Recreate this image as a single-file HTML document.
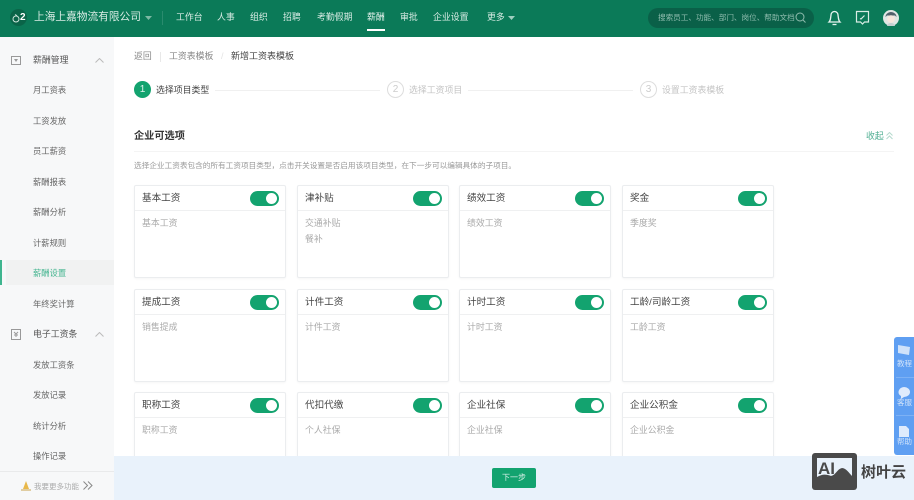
<!DOCTYPE html>
<html lang="zh"><head><meta charset="utf-8"><style>
html,body{margin:0;padding:0}
body{width:914px;height:500px;position:relative;overflow:hidden;background:#fff;font-family:"Liberation Sans","Noto Sans CJK SC",sans-serif;color:#333}
.a{position:absolute;white-space:nowrap;line-height:1}
#top{position:absolute;left:0;top:0;width:914px;height:37px;background:#0b7a58}
.n{position:absolute;top:12px;font-size:8.9px;line-height:11px;color:#d9ece5;white-space:nowrap}
#side{position:absolute;left:0;top:37px;width:114px;height:463px;background:#f7f8f9}
.m{position:absolute;left:33px;font-size:8.300px;line-height:11px;color:#666;white-space:nowrap}
.g{position:absolute;left:33px;font-size:8.900px;line-height:11px;color:#555;white-space:nowrap}
.c{position:absolute;box-sizing:border-box;width:152px;height:93px;background:#fff;border:1px solid #ebedef;border-radius:2px;box-shadow:0 1px 2px rgba(0,0,0,.04)}
.c b{position:absolute;left:7px;top:6px;font-weight:400;font-size:9.600px;line-height:13px;color:#444;white-space:nowrap}
.c hr{position:absolute;left:0;right:0;top:24px;margin:0;border:0;border-top:1px solid #eff0f1}
.c i{position:absolute;right:6px;top:5px;width:29px;height:15px;border-radius:8px;background:#13a36f}
.c i:after{content:"";position:absolute;right:2px;top:2px;width:11px;height:11px;border-radius:50%;background:#fff}
.c p{position:absolute;left:7px;margin:0;font-size:8.900px;line-height:11px;color:#aaa;white-space:nowrap}
.st{position:absolute;top:81px;width:17px;height:17px;box-sizing:border-box;border-radius:50%;border:1px solid #ddd;color:#ccc;font-size:10px;line-height:15px;text-align:center}
.ln{position:absolute;top:90px;height:1px;background:#f0f0f0}
</style></head><body>
<div id="top">
<svg style="position:absolute;left:10px;top:9px" width="18" height="18" viewBox="0 0 18 18"><circle cx="8.500" cy="8.500" r="8.500" fill="#0a6448"/><circle cx="6" cy="10" r="3" fill="none" stroke="#cfe5dc" stroke-width="1"/><path d="M5 5.500l2 1.200" stroke="#cfe5dc"/></svg>
<span class="a" style="left:20px;top:13px;font-size:10px;font-weight:700;color:#fff">2</span>
<span class="a" style="left:34px;top:12px;font-size:10.700px;color:#d9ece5">上海上嘉物流有限公司</span>
<svg style="position:absolute;left:145px;top:16px" width="7" height="4"><path d="M0 0h7L3.500 4z" fill="#7db9a4"/></svg>
<div style="position:absolute;left:162px;top:11px;width:1px;height:14px;background:#2a8b6e"></div>
<span class="n" style="left:176px">工作台</span><span class="n" style="left:217px">人事</span><span class="n" style="left:250px">组织</span><span class="n" style="left:283px">招聘</span><span class="n" style="left:317px">考勤假期</span><span class="n" style="left:367px;color:#e8f4ef">薪酬</span><span class="n" style="left:400px">审批</span><span class="n" style="left:433px">企业设置</span><span class="n" style="left:487px">更多</span>
<svg style="position:absolute;left:508px;top:16px" width="7" height="4"><path d="M0 0h7L3.500 4z" fill="#9fcfbf"/></svg>
<div style="position:absolute;left:367px;top:29px;width:18px;height:2px;background:#fff"></div>
<div style="position:absolute;left:648px;top:8px;width:166px;height:20px;border-radius:10px;background:#0a6048"></div>
<span class="a" style="left:658px;top:14px;font-size:7.600px;color:#8fbcae">搜索员工、功能、部门、岗位、帮助文档</span>
<svg style="position:absolute;left:795px;top:12px" width="12" height="12" viewBox="0 0 12 12" fill="none" stroke="#8fbcae"><circle cx="5" cy="5" r="4"/><path d="M8 8l2.500 2.500"/></svg>
<svg style="position:absolute;left:827px;top:9px" width="15" height="17" viewBox="0 0 15 17" fill="none" stroke="#e6f4ef" stroke-width="1.300"><path d="M2 13c1.500-1.500 1.500-3 2-7a3.500 3.500 0 017 0c.5 4 .5 5.500 2 7z"/><path d="M5.500 15.500h4"/></svg>
<svg style="position:absolute;left:855px;top:10px" width="15" height="16" viewBox="0 0 15 16" fill="none" stroke="#d9ece5" stroke-width="1.200"><path d="M1.500 1.500h12v10.500h-4l-2 2-2-2h-4z"/><path d="M5 8.500l1 .5 3.500-3.500"/></svg>
<svg style="position:absolute;left:883px;top:10px" width="16" height="16" viewBox="0 0 16 16"><circle cx="8" cy="8" r="8" fill="#dfe6e3"/><path d="M2.500 7a5.500 5 0 0111 0l-1.500-1.500H4z" fill="#50606a"/><circle cx="8" cy="9" r="3.800" fill="#f6e6dc"/><path d="M4 16a4 3 0 018 0z" fill="#c4cfd0"/></svg>
</div>
<div id="side">
<svg style="position:absolute;left:11px;top:19px" width="10" height="9" viewBox="0 0 10 9" fill="none" stroke="#999"><rect x=".5" y=".5" width="9" height="8"/><path d="M3 3h4L5 6z" fill="#999" stroke="none"/></svg>
<span class="g" style="top:18px">薪酬管理</span>
<svg style="position:absolute;left:95px;top:21px" width="9" height="5" fill="none" stroke="#bbb"><path d="M.5 4.500l4-4 4 4"/></svg>
<span class="m" style="top:48px">月工资表</span><span class="m" style="top:79px">工资发放</span><span class="m" style="top:109px">员工薪资</span><span class="m" style="top:140px">薪酬报表</span><span class="m" style="top:170px">薪酬分析</span><span class="m" style="top:201px">计薪规则</span>
<div style="position:absolute;left:6px;top:223px;width:108px;height:25px;background:#f1f2f2"></div><div style="position:absolute;left:0;top:223px;width:2px;height:25px;background:#3fb58f"></div>
<span class="m" style="top:231px;color:#45b590">薪酬设置</span><span class="m" style="top:262px">年终奖计算</span>
<svg style="position:absolute;left:11px;top:292px" width="10" height="11" viewBox="0 0 10 11" fill="none" stroke="#999"><rect x=".5" y=".5" width="9" height="10"/><path d="M3 3l2 2 2-2M5 5v3M3 6h4"/></svg>
<span class="g" style="top:292px">电子工资条</span>
<svg style="position:absolute;left:95px;top:295px" width="9" height="5" fill="none" stroke="#bbb"><path d="M.5 4.500l4-4 4 4"/></svg>
<span class="m" style="top:323px">发放工资条</span><span class="m" style="top:353px">发放记录</span><span class="m" style="top:384px">统计分析</span><span class="m" style="top:414px">操作记录</span>
<div style="position:absolute;left:0;top:434px;width:114px;height:1px;background:#e9eaeb"></div>
<svg style="position:absolute;left:21px;top:443px" width="10" height="11"><path d="M5 1l3 8H2z" fill="#e8b84a"/><path d="M0 10h10" stroke="#c9a24a"/></svg>
<span class="a" style="left:34px;top:446px;font-size:7.500px;color:#aaa">我要更多功能</span>
<svg style="position:absolute;left:83px;top:444px" width="10" height="9" fill="none" stroke="#888"><path d="M.5.500l4 4-4 4M5 .5l4 4-4 4"/></svg>
</div>

<span class="a" style="left:134px;top:52px;font-size:8.900px;color:#888">返回</span>
<div style="position:absolute;left:160px;top:52px;width:1px;height:10px;background:#e8e8e8"></div>
<span class="a" style="left:169px;top:52px;font-size:8.900px;color:#888">工资表模板</span>
<span class="a" style="left:221px;top:52px;font-size:9px;color:#e3e3e3">/</span>
<span class="a" style="left:231px;top:52px;font-size:9px;color:#444">新增工资表模板</span>

<div class="st" style="left:134px;background:#13a36f;border-color:#13a36f;color:#dff3ec">1</div>
<span class="a" style="left:156px;top:86px;font-size:8.900px;color:#444">选择项目类型</span>
<div class="ln" style="left:215px;width:165px"></div>
<div class="st" style="left:387px">2</div>
<span class="a" style="left:409px;top:86px;font-size:8.900px;color:#c4c4c4">选择工资项目</span>
<div class="ln" style="left:468px;width:165px"></div>
<div class="st" style="left:640px">3</div>
<span class="a" style="left:662px;top:86px;font-size:8.900px;color:#c4c4c4">设置工资表模板</span>

<span class="a" style="left:134px;top:132px;font-size:10.200px;color:#333;font-weight:700">企业可选项</span>
<span class="a" style="left:866px;top:132px;font-size:8.900px;color:#4fae92">收起</span>
<svg style="position:absolute;left:886px;top:132px" width="7" height="8" fill="none" stroke="#b5d9cd"><path d="M.5 3.500l3-3 3 3M.5 7l3-3 3 3"/></svg>
<div style="position:absolute;left:134px;top:151px;width:760px;height:1px;background:#f4f4f4"></div>
<span class="a" style="left:134px;top:162px;font-size:7.650px;color:#999">选择企业工资表包含的所有工资项目类型，点击开关设置是否启用该项目类型，在下一步可以编辑具体的子项目。</span>

<div class="c" style="left:134px;top:185px"><b>基本工资</b><i></i><hr><p style="top:32px">基本工资</p></div>
<div class="c" style="left:297px;top:185px"><b>津补贴</b><i></i><hr><p style="top:32px">交通补贴</p><p style="top:48px">餐补</p></div>
<div class="c" style="left:459px;top:185px"><b>绩效工资</b><i></i><hr><p style="top:32px">绩效工资</p></div>
<div class="c" style="left:622px;top:185px"><b>奖金</b><i></i><hr><p style="top:32px">季度奖</p></div>
<div class="c" style="left:134px;top:289px"><b>提成工资</b><i></i><hr><p style="top:32px">销售提成</p></div>
<div class="c" style="left:297px;top:289px"><b>计件工资</b><i></i><hr><p style="top:32px">计件工资</p></div>
<div class="c" style="left:459px;top:289px"><b>计时工资</b><i></i><hr><p style="top:32px">计时工资</p></div>
<div class="c" style="left:622px;top:289px"><b>工龄/司龄工资</b><i></i><hr><p style="top:32px">工龄工资</p></div>
<div class="c" style="left:134px;top:392px"><b>职称工资</b><i></i><hr><p style="top:32px">职称工资</p></div>
<div class="c" style="left:297px;top:392px"><b>代扣代缴</b><i></i><hr><p style="top:32px">个人社保</p></div>
<div class="c" style="left:459px;top:392px"><b>企业社保</b><i></i><hr><p style="top:32px">企业社保</p></div>
<div class="c" style="left:622px;top:392px"><b>企业公积金</b><i></i><hr><p style="top:32px">企业公积金</p></div>

<div style="position:absolute;left:114px;top:456px;width:800px;height:44px;background:#e9f2fb"></div>
<div style="position:absolute;left:492px;top:468px;width:44px;height:20px;border-radius:2px;background:#13a36f;color:#d9f0e8;font-size:8px;line-height:20px;text-align:center">下一步</div>

<div style="position:absolute;left:894px;top:337px;width:20px;height:118px;background:#5f9ff2;border-radius:3px 0 0 3px"></div>
<div style="position:absolute;left:896px;top:377px;width:18px;height:1px;background:#7db1f5"></div>
<div style="position:absolute;left:896px;top:415px;width:18px;height:1px;background:#7db1f5"></div>
<svg style="position:absolute;left:898px;top:345px" width="12" height="11"><path d="M0 0l12 2-1 8-11-2z" fill="#cfe2fa"/></svg>
<span class="a" style="left:897px;top:360px;font-size:7.500px;color:#cfe2fa">教程</span>
<svg style="position:absolute;left:898px;top:387px" width="12" height="12"><path d="M6 0a6 5 0 110 10L3 12v-3A6 5 0 016 0z" fill="#dfebfc"/></svg>
<span class="a" style="left:897px;top:399px;font-size:7.500px;color:#cfe2fa">客服</span>
<svg style="position:absolute;left:899px;top:426px" width="10" height="11"><path d="M0 0h7l3 3v8H0z" fill="#dfebfc"/></svg>
<span class="a" style="left:897px;top:438px;font-size:7.500px;color:#cfe2fa">帮助</span>

<svg style="position:absolute;left:812px;top:453px" width="45" height="37" viewBox="0 0 45 37"><rect width="45" height="37" rx="3" fill="#4a4a4a"/><path d="M5 5h35v25H5z" fill="#e9f2fb"/><path d="M5 30v-6c5-3 9-3 14-1 5-1 6-7 11-8 4 0 7 5 10 8v7z" fill="#4a4a4a"/><text x="6" y="21" font-family="Liberation Sans" font-size="17" font-weight="700" fill="#4a4a4a">AI</text></svg>
<span class="a" style="left:861px;top:465px;font-size:15px;font-weight:700;color:#444">树叶云</span>
</body></html>
